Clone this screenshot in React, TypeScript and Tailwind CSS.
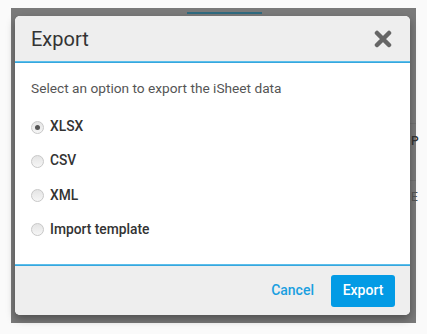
import React, { useState } from 'react';

const options = ['XLSX', 'CSV', 'XML', 'Import template'];

const Radio: React.FC<{ checked: boolean }> = ({ checked }) => (
  <span className="flex h-[13px] w-[13px] items-center justify-center rounded-full border border-[#c8c8c8] bg-gradient-to-b from-[#e4e4e4] to-[#f6f6f6]">
    {checked && <span className="h-[5px] w-[5px] rounded-full bg-[#555]" />}
  </span>
);

const App: React.FC = () => {
  const [selected, setSelected] = useState('XLSX');

  return (
    <div className="h-[334px] w-[427px] bg-[#fafafa] pt-[8px] pl-[11px] font-['Roboto',sans-serif]">
      {/* dimmed page behind the dialog */}
      <div className="relative h-[315px] w-[405px] bg-[#7a7a7a] pt-[8px] pl-[4px]">
        <div className="absolute left-[176px] top-[4px] h-[2px] w-[75px] bg-[#2f6b80]" />
        <div className="absolute left-[399px] top-[115px] h-px w-[6px] bg-[#707070]" />
        <div className="absolute left-[399px] top-[172px] h-px w-[6px] bg-[#707070]" />
        <span className="absolute left-[400px] top-[127px] text-[12px] font-medium leading-none text-[#333]">P</span>
        <span className="absolute left-[400px] top-[183px] text-[12px] leading-none text-[#555]">E</span>

        <div className="relative flex h-[299px] w-[395px] flex-col overflow-hidden rounded-[5px] bg-white shadow-[0_4px_8px_rgba(0,0,0,0.35)]">
          <div className="flex h-[45px] items-center justify-between bg-[#eeeeee] pl-[16px] pr-[18px]">
            <h1 className="text-[20px] leading-none text-[#333]">Export</h1>
            <svg width="18" height="18" viewBox="0 0 18 18" className="mt-[1px]">
              <path d="M3 3 L15 15 M15 3 L3 15" stroke="#666" strokeWidth="4.5" strokeLinecap="round" />
            </svg>
          </div>
          <div className="h-[2px] bg-gradient-to-b from-[#6ccbf2] to-[#1e9ad6]" />

          <div className="flex-1 px-[16px] pt-[17px]">
            <p className="text-[13.7px] leading-[16px] text-[#555]">Select an option to export the iSheet data</p>
            <div className="mt-[23px] flex flex-col gap-[18.3px]">
              {options.map((o) => (
                <label key={o} className="flex h-[16px] cursor-pointer items-center gap-[6px]" onClick={() => setSelected(o)}>
                  <Radio checked={selected === o} />
                  <span className="text-[13.8px] font-medium leading-none text-[#333]">{o}</span>
                </label>
              ))}
            </div>
          </div>

          <div className="h-[2px] bg-gradient-to-b from-[#6ccbf2] to-[#1e9ad6]" />
          <div className="flex h-[49px] items-center justify-end gap-[17px] bg-[#eeeeee] pr-[15px]">
            <button className="text-[14px] font-medium text-[#1a9fe0]">Cancel</button>
            <button className="h-[32px] w-[64px] rounded-[3px] bg-[#039be5] text-[14px] font-medium text-white">Export</button>
          </div>
        </div>
      </div>
    </div>
  );
};

export default App;
